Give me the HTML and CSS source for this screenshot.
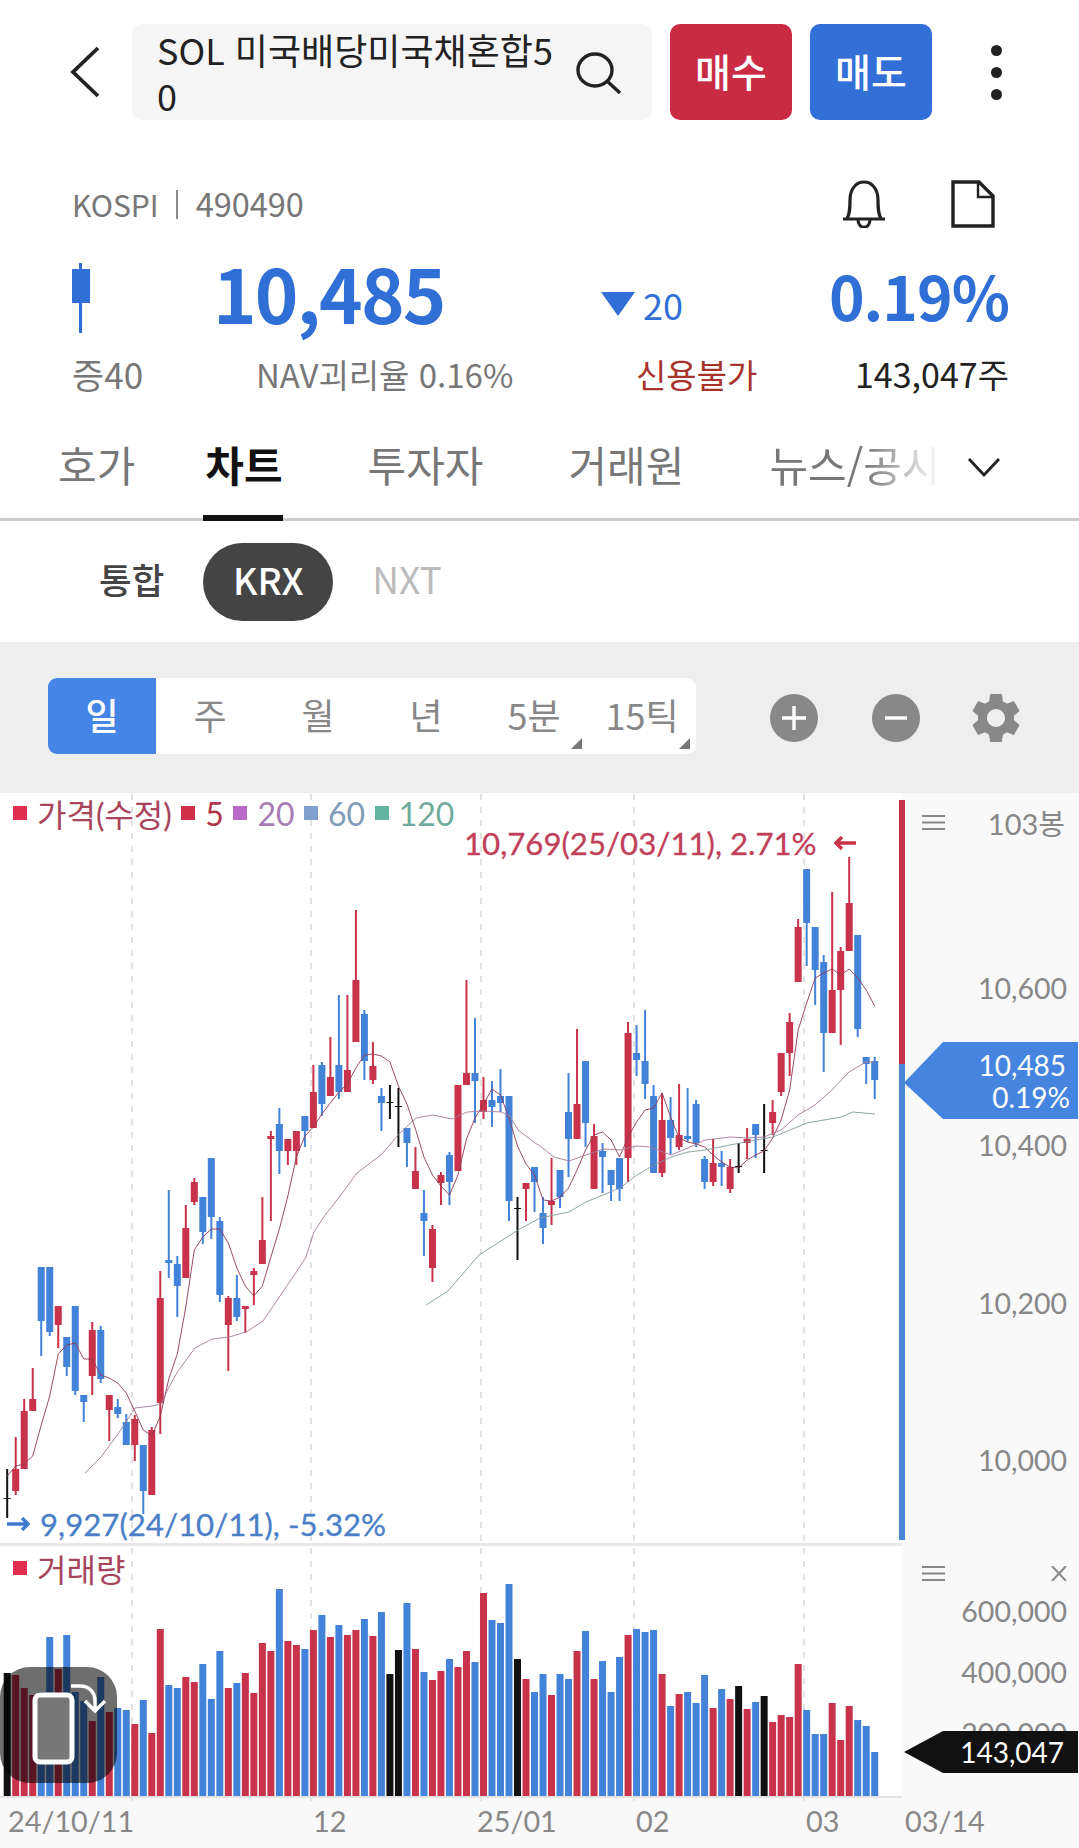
FILE: index.html
```html
<!DOCTYPE html>
<html lang="ko">
<head>
    <meta charset="UTF-8">
    <meta name="viewport" content="width=device-width, initial-scale=1.0">
    <title>SOL 미국배당미국채혼합50 차트</title>
    <link rel="stylesheet" href="styles.css">
</head>
<body>
    <header class="topbar">
        <svg class="back-icon" width="32" height="52" viewBox="0 0 32 52" fill="none" stroke="#222" stroke-width="3.8">
            <path d="M29 2 L4 26 L29 50"></path>
        </svg>
        <div class="search-box">
            <span class="search-text">SOL 미국배당미국채혼합50</span>
            <svg class="search-icon" width="46" height="42" viewBox="0 0 46 42" fill="none" stroke="#222" stroke-width="3.4">
                <ellipse cx="19" cy="18" rx="17" ry="16"></ellipse>
                <path d="M31 29 L44 41"></path>
            </svg>
        </div>
        <button class="order-btn buy">매수</button>
        <button class="order-btn sell">매도</button>
        <div class="more-btn"><i></i><i></i><i></i></div>
    </header>

    <section class="quote">
        <div class="code-row">
            <span class="code">KOSPI<b></b><em>490490</em></span>
            <div class="quote-icons">
                <svg width="46" height="48" viewBox="0 0 46 48" fill="none" stroke="#222" stroke-width="3.2">
                    <path d="M2 39 H44 M6 39 C9 33 9 28 9 20 C9 9 15 2 23 2 C31 2 37 9 37 20 C37 28 37 33 40 39"></path>
                    <path d="M17 39 C17 50 29 50 29 39"></path>
                </svg>
                <svg width="44" height="48" viewBox="0 0 44 48" fill="none" stroke="#222" stroke-width="3.4">
                    <path d="M2 2 H28 L42 16 V46 H2 Z"></path>
                    <path d="M27 2 V17 H42" stroke-width="2.4"></path>
                </svg>
            </div>
        </div>
        <div class="price-row">
            <div class="mini-candle"><i></i></div>
            <span class="price">10,485</span>
            <span class="change"><i class="down-arrow"></i>20</span>
            <span class="rate">0.19%</span>
        </div>
        <div class="info-row">
            <span class="margin">증40</span>
            <span class="nav">NAV괴리율 0.16%</span>
            <span class="credit">신용불가</span>
            <span class="volume">143,047주</span>
        </div>
    </section>

    <nav class="tabs">
        <a class="tab first">호가</a>
        <a class="tab active">차트</a>
        <a class="tab">투자자</a>
        <a class="tab">거래원</a>
        <a class="tab fade">뉴스/공시</a>
        <svg class="tabs-more" width="34" height="20" viewBox="0 0 34 20" fill="none" stroke="#222" stroke-width="2.8">
            <path d="M2 2 L17 18 L32 2"></path>
        </svg>
    </nav>

    <div class="market-tabs">
        <span class="market">통합</span>
        <span class="market on">KRX</span>
        <span class="market off">NXT</span>
    </div>

    <div class="chart-tools">
        <div class="period">
            <span class="period-item on">일</span>
            <span class="period-item">주</span>
            <span class="period-item">월</span>
            <span class="period-item">년</span>
            <span class="period-item corner">5분</span>
            <span class="period-item corner">15틱</span>
        </div>
        <div class="tool-btns">
            <svg width="48" height="48" viewBox="0 0 48 48"><circle cx="24" cy="24" r="24" fill="#888"></circle><path d="M12 24 H36 M24 12 V36" stroke="#fff" stroke-width="3.4"></path></svg>
            <svg width="48" height="48" viewBox="0 0 48 48"><circle cx="24" cy="24" r="24" fill="#888"></circle><path d="M13 24 H35" stroke="#fff" stroke-width="3.4"></path></svg>
            <svg class="gear" width="50" height="50" viewBox="2 2 20 20" fill="#888"><path d="M19.14 12.94c.04-.3.06-.61.06-.94 0-.32-.02-.64-.07-.94l2.03-1.58c.18-.14.23-.41.12-.61l-1.92-3.32c-.12-.22-.37-.29-.59-.22l-2.39.96c-.5-.38-1.03-.7-1.62-.94l-.36-2.54c-.04-.24-.24-.41-.48-.41h-3.84c-.24 0-.43.17-.47.41l-.36 2.54c-.59.24-1.13.57-1.62.94l-2.39-.96c-.22-.08-.47 0-.59.22L2.74 8.87c-.12.21-.08.47.12.61l2.03 1.58c-.05.3-.09.63-.09.94s.02.64.07.94l-2.03 1.58c-.18.14-.23.41-.12.61l1.92 3.32c.12.22.37.29.59.22l2.39-.96c.5.38 1.03.7 1.62.94l.36 2.54c.05.24.24.41.48.41h3.84c.24 0 .44-.17.47-.41l.36-2.54c.59-.24 1.13-.56 1.62-.94l2.39.96c.22.08.47 0 .59-.22l1.92-3.32c.12-.22.07-.47-.12-.61l-2.01-1.58zM12 15.6c-1.98 0-3.6-1.62-3.6-3.6s1.62-3.6 3.6-3.6 3.6 1.62 3.6 3.6-1.62 3.6-3.6 3.6z"></path></svg>
        </div>
    </div>

    <section class="chart">
        <div class="price-pane">
            <div class="legend">
                <i class="dot c-red"></i><span class="t-red">가격(수정)</span>
                <i class="dot c-ma5"></i><span class="t-ma5">5</span>
                <i class="dot c-ma20"></i><span class="t-ma20">20</span>
                <i class="dot c-ma60"></i><span class="t-ma60">60</span>
                <i class="dot c-ma120"></i><span class="t-ma120">120</span>
            </div>
            <div class="high-label">10,769(25/03/11), 2.71%<svg width="22" height="14" viewBox="0 0 22 14" fill="none" stroke="#c8324b" stroke-width="3.4"><path d="M22 7 H2 M8 1 L2 7 L8 13"></path></svg></div>
            <div class="low-label"><svg width="23" height="14" viewBox="0 0 23 14" fill="none" stroke="#3f7ccf" stroke-width="3.4"><path d="M0 7 H21 M15 1 L21 7 L15 13"></path></svg>9,927(24/10/11), -5.32%</div>
        </div>
        <div class="price-axis">
            <div class="axis-head">
                <svg class="menu-icon" width="23" height="15" viewBox="0 0 23 15" stroke="#888" stroke-width="2"><path d="M0 1 H23 M0 7.5 H23 M0 14 H23"></path></svg>
                <span class="bar-count">103봉</span>
            </div>
            <span class="price-tick">10,600</span>
            <span class="price-tick">10,400</span>
            <span class="price-tick">10,200</span>
            <span class="price-tick">10,000</span>
        </div>

        <div class="volume-pane">
            <div class="legend"><i class="dot c-red"></i><span class="t-red">거래량</span></div>
        </div>
        <div class="volume-axis">
            <div class="axis-head small">
                <svg class="menu-icon" width="23" height="15" viewBox="0 0 23 15" stroke="#888" stroke-width="2"><path d="M0 1 H23 M0 7.5 H23 M0 14 H23"></path></svg>
                <svg class="close-icon" width="16" height="15" viewBox="0 0 16 15" stroke="#888" stroke-width="2"><path d="M1 0 L15 15 M15 0 L1 15"></path></svg>
            </div>
            <span class="volume-tick">600,000</span>
            <span class="volume-tick">400,000</span>
            <span class="volume-tick">200,000</span>
        </div>

        <div class="date-axis">
            <span class="date" style="left:8px">24/10/11</span>
            <span class="date" style="left:313px">12</span>
            <span class="date" style="left:477px">25/01</span>
            <span class="date" style="left:636px">02</span>
            <span class="date" style="left:806px">03</span>
            <span class="date" style="left:905px">03/14</span>
        </div>

        <svg id="chartSvg" class="chart-svg" width="910" height="1055" viewBox="0 793 910 1055"></svg>

        <div class="tag price-tag"><span>10,485</span><span class="tag-rate">0.19%</span></div>
        <div class="tag volume-tag"><span>143,047</span></div>
    </section>

    <div class="rotate-btn">
        <svg width="117" height="116" viewBox="0 0 117 116" fill="none">
            <rect x="35" y="28" width="37" height="67" rx="5" fill="#777" stroke="#fff" stroke-width="5"></rect>
            <path d="M71 19 H80 C90 19 95 26 95 34 V42" stroke="#fff" stroke-width="3.4"></path>
            <path d="M85 34 L95 44 L105 34" stroke="#fff" stroke-width="3.4"></path>
        </svg>
    </div>

    <script src="chart.js"></script>
</body>
</html>
```

FILE: styles.css
```css
* {
    box-sizing: border-box;
}
body {
    margin: 0;
    width: 1079px;
    height: 1848px;
    overflow: hidden;
    position: relative;
    background: #fff;
    color: #222;
    font-family: "Noto Sans CJK KR", "Noto Sans", sans-serif;
}

/* top bar */
.topbar {
    display: flex;
    align-items: center;
    height: 96px;
    margin-top: 24px;
    padding-left: 69px;
}
.back-icon {
    margin-right: 31px;
}
.search-box {
    width: 520px;
    height: 96px;
    display: flex;
    align-items: center;
    justify-content: space-between;
    padding: 0 30px 0 25px;
    background: #f5f5f5;
    border-radius: 10px;
}
.search-text {
    width: 402px;
    font-size: 36px;
    line-height: 46px;
    word-break: break-all;
}
.search-icon {
    margin-top: 2px;
}
.order-btn {
    height: 96px;
    padding-bottom: 6px;
    border: 0;
    border-radius: 10px;
    color: #fff;
    font-family: inherit;
    font-size: 39px;
    font-weight: 500;
}
.buy {
    width: 122px;
    margin-left: 18px;
    background: #c92b45;
}
.sell {
    width: 122px;
    margin-left: 18px;
    background: #326fd6;
}
.more-btn {
    display: flex;
    flex-direction: column;
    gap: 11px;
    margin-left: 59px;
}
.more-btn i {
    width: 11px;
    height: 11px;
    border-radius: 50%;
    background: #222;
}

/* quote */
.quote {
    padding: 54px 70px 0 72px;
}
.code-row {
    display: flex;
    align-items: center;
    justify-content: space-between;
    height: 60px;
}
.code {
    display: flex;
    align-items: center;
    font-size: 30px;
    color: #777;
}
.code b {
    width: 2px;
    height: 29px;
    margin: 0 18px 0 17px;
    background: #888;
}
.code em {
    font-style: normal;
    font-size: 32.5px;
    margin-top: -3px;
}
.quote-icons {
    display: flex;
    gap: 64px;
    margin-right: 14px;
}
.price-row {
    display: grid;
    grid-template-columns: 141px 388px 1fr auto;
    align-items: center;
    height: 90px;
    margin-top: 4px;
    color: #2f6fd6;
}
.mini-candle {
    position: relative;
    width: 18px;
    height: 70px;
    margin-top: 12px;
}
.mini-candle::before {
    content: "";
    position: absolute;
    left: 7px;
    top: 0;
    width: 3px;
    height: 70px;
    background: #2f6fd6;
}
.mini-candle i {
    position: absolute;
    left: 0;
    top: 6px;
    width: 18px;
    height: 34px;
    background: #2f6fd6;
}
.price {
    font-size: 74px;
    font-weight: 700;
    letter-spacing: -1.8px;
}
.change {
    display: flex;
    align-items: center;
    font-size: 36px;
    margin-top: 24px;
}
.down-arrow {
    width: 0;
    height: 0;
    margin-right: 8px;
    border-left: 17px solid transparent;
    border-right: 17px solid transparent;
    border-top: 24px solid #2f6fd6;
}
.rate {
    font-size: 60.5px;
    font-weight: 700;
    letter-spacing: -1px;
    margin-top: 5px;
}
.info-row {
    display: grid;
    grid-template-columns: 184px 380px 1fr auto;
    align-items: center;
    height: 50px;
    margin-top: 20px;
    font-size: 33px;
    color: #777;
}
.margin {
    font-size: 35px;
}
.credit {
    color: #a8322c;
}
.volume {
    color: #222;
    font-size: 34px;
}

/* tabs */
.tabs {
    display: flex;
    align-items: flex-start;
    gap: 85px;
    height: 118px;
    margin-top: 5px;
    padding: 36px 0 0 58px;
    border-bottom: 3px solid #ccc;
    font-size: 42px;
    color: #777;
    position: relative;
}
.tab {
    line-height: 50px;
    position: relative;
}
.first {
    margin-right: -15px;
}
.active {
    color: #111;
    font-weight: 700;
}
.active::after {
    content: "";
    position: absolute;
    left: -2px;
    right: 0;
    top: 76px;
    height: 6px;
    background: #111;
}
.fade {
    width: 172px;
    white-space: nowrap;
    overflow: hidden;
    -webkit-mask-image: linear-gradient(to right, #000 55%, transparent 100%);
    mask-image: linear-gradient(to right, #000 55%, transparent 100%);
}
.tabs-more {
    position: absolute;
    left: 967px;
    top: 54px;
}

/* KRX / NXT */
.market-tabs {
    display: flex;
    align-items: center;
    height: 121px;
    padding-left: 99px;
    font-size: 35.5px;
}
.market {
    font-weight: 500;
    color: #444;
    margin-top: -7px;
}
.market.on {
    width: 130px;
    height: 78px;
    margin: 0 39px 0 39px;
    line-height: 72px;
    text-align: center;
    border-radius: 39px;
    background: #444;
    color: #fff;
    font-size: 37px;
}
.market.off {
    font-weight: 400;
    color: #bbb;
    font-size: 37px;
}

/* period bar */
.chart-tools {
    display: flex;
    align-items: center;
    justify-content: space-between;
    height: 151px;
    padding: 0 56px 0 48px;
    background: #eee;
}
.period {
    display: flex;
    height: 76px;
    margin-top: -3px;
    border-radius: 9px;
    overflow: hidden;
    background: #fff;
}
.period-item {
    position: relative;
    width: 108px;
    line-height: 72px;
    text-align: center;
    font-size: 36px;
    color: #888;
}
.period-item.on {
    background: #4585e5;
    color: #fff;
    font-weight: 500;
}
.corner::after {
    content: "";
    position: absolute;
    right: 6px;
    bottom: 5px;
    border-left: 11px solid transparent;
    border-bottom: 11px solid #777;
}
.tool-btns {
    display: flex;
    align-items: center;
    gap: 54px;
}
.gear {
    margin: 0 2px 0 -3px;
}

/* chart */
.chart {
    position: relative;
    display: grid;
    grid-template-columns: 902px 177px;
    grid-template-rows: 750px 253px 52px;
    font-family: Lato, "Noto Sans CJK KR", sans-serif;
}
.price-pane,
.volume-pane {
    position: relative;
}
.volume-pane {
    padding-top: 2px;
    border-top: 3px solid #e8e8e8;
}
.legend {
    position: relative;
    z-index: 1;
    display: flex;
    align-items: center;
    height: 40px;
    padding-left: 13px;
    font-size: 32px;
}
.dot {
    width: 14px;
    height: 14px;
    margin-right: 10px;
}
.legend span {
    margin-right: 9.5px;
}
.c-red { background: #e0304f; }
.c-ma5 { background: #d0304a; }
.c-ma20 { background: #b86cc8; }
.c-ma60 { background: #7fa0cc; }
.c-ma120 { background: #62b5a0; }
.t-red { color: #a8445c; }
.t-ma5 { color: #b23448; }
.t-ma20 { color: #a77cb5; }
.t-ma60 { color: #7f9cb8; }
.t-ma120 { color: #6fab9c; }
.high-label,
.low-label {
    position: absolute;
    z-index: 1;
    display: flex;
    align-items: center;
    font-size: 31.2px;
    -webkit-text-stroke: 0.3px;
    white-space: nowrap;
}
.high-label {
    left: 464px;
    top: 31px;
    gap: 17px;
    color: #c0405a;
}
.low-label {
    left: 7px;
    top: 712px;
    gap: 10px;
    color: #4a7fc8;
}
.price-axis,
.volume-axis {
    display: flex;
    flex-direction: column;
    align-items: flex-end;
    padding-right: 12px;
    background: #f9f9f9;
    color: #888;
    font-size: 28.5px;
}
.axis-head {
    display: flex;
    align-items: center;
    justify-content: space-between;
    width: 100%;
    height: 58px;
    padding-left: 20px;
    margin-bottom: 59px;
}
.axis-head.small {
    height: 37.5px;
    margin-bottom: 0;
    align-items: flex-end;
    padding-right: 0;
}
.bar-count {
    font-size: 29px;
    margin-right: 2px;
}
.price-tick {
    height: 157.3px;
    line-height: 157.3px;
}
.volume-tick {
    height: 61px;
    line-height: 61px;
}
.date-axis {
    grid-column: 1 / 3;
    position: relative;
    background: #f9f9f9;
    color: #888;
    font-size: 28.8px;
}
.date {
    position: absolute;
    top: 8px;
}
.chart-svg {
    position: absolute;
    left: 0;
    top: 0;
    pointer-events: none;
}
.tag {
    position: absolute;
    left: 904px;
    width: 174px;
    display: flex;
    flex-direction: column;
    align-items: flex-end;
    justify-content: center;
    color: #fff;
    font-size: 28px;
    line-height: 32px;
    padding-right: 12px;
}
.price-tag {
    top: 249px;
    height: 77px;
    background: #4585e0;
    clip-path: polygon(0 53%, 39px 0, 100% 0, 100% 100%, 39px 100%);
}
.tag-rate {
    margin-right: -4px;
}
.volume-tag {
    top: 938px;
    height: 42px;
    background: #111;
    clip-path: polygon(0 50%, 39px 0, 100% 0, 100% 100%, 39px 100%);
    padding-right: 14px;
}

/* floating rotate button */
.rotate-btn {
    position: absolute;
    left: 0;
    top: 1667px;
    width: 117px;
    height: 116px;
    border-radius: 30px;
    background: rgba(0, 0, 0, 0.57);
}
.rotate-btn svg {
    display: block;
}
```

FILE: chart.js
```js
const RED = '#c8324b';
const BLUE = '#4382d9';
const BLACK = '#111';
const PITCH = 8.505;
const FIRST_X = 7.2;
const VOLUME_BASE = 1796;

// [wick top, body top, body bottom, wick bottom, colour] in screen px
const candles = [
    [1469, 1498, 1499, 1518, 'k'], [1437, 1469, 1491, 1495, 'r'], [1399, 1411, 1469, 1469, 'r'], [1368, 1399, 1411, 1411, 'r'],
    [1267, 1267, 1321, 1356, 'b'], [1267, 1267, 1332, 1336, 'b'], [1306, 1306, 1325, 1348, 'r'], [1337, 1337, 1367, 1376, 'b'],
    [1306, 1306, 1391, 1395, 'b'], [1395, 1395, 1402, 1422, 'b'], [1322, 1330, 1376, 1395, 'r'], [1326, 1330, 1379, 1383, 'b'],
    [1395, 1395, 1410, 1441, 'r'], [1399, 1407, 1414, 1418, 'b'], [1414, 1422, 1445, 1445, 'b'], [1415, 1419, 1445, 1461, 'r'],
    [1445, 1445, 1491, 1514, 'b'], [1427, 1430, 1495, 1495, 'r'], [1271, 1298, 1403, 1434, 'r'], [1190, 1260, 1263, 1278, 'b'],
    [1256, 1264, 1286, 1317, 'b'], [1205, 1228, 1278, 1278, 'r'], [1178, 1182, 1202, 1205, 'r'], [1197, 1197, 1232, 1244, 'b'],
    [1158, 1158, 1217, 1239, 'b'], [1217, 1221, 1295, 1302, 'b'], [1296, 1298, 1325, 1371, 'r'], [1275, 1298, 1317, 1321, 'b'],
    [1306, 1306, 1309, 1333, 'r'], [1268, 1271, 1275, 1305, 'r'], [1197, 1240, 1264, 1264, 'r'], [1131, 1136, 1139, 1221, 'r'],
    [1108, 1124, 1151, 1174, 'b'], [1139, 1139, 1151, 1165, 'r'], [1131, 1131, 1151, 1165, 'r'], [1116, 1116, 1131, 1147, 'b'],
    [1065, 1092, 1128, 1128, 'r'], [1062, 1065, 1104, 1116, 'b'], [1037, 1077, 1096, 1096, 'r'], [995, 1065, 1092, 1099, 'b'],
    [995, 1070, 1092, 1092, 'r'], [910, 980, 1042, 1042, 'r'], [1010, 1014, 1061, 1080, 'b'], [1042, 1066, 1080, 1084, 'r'],
    [1088, 1096, 1103, 1131, 'b'], [1085, 1102, 1103, 1119, 'k'], [1088, 1106, 1107, 1147, 'k'], [1128, 1128, 1143, 1167, 'b'],
    [1147, 1171, 1189, 1189, 'r'], [1190, 1213, 1221, 1256, 'b'], [1225, 1229, 1268, 1282, 'r'], [1172, 1175, 1183, 1205, 'r'],
    [1152, 1155, 1182, 1205, 'b'], [1085, 1085, 1171, 1171, 'r'], [980, 1073, 1085, 1085, 'r'], [1018, 1073, 1081, 1123, 'b'],
    [1077, 1100, 1112, 1119, 'r'], [1081, 1100, 1107, 1127, 'b'], [1069, 1096, 1103, 1112, 'b'], [1096, 1096, 1201, 1221, 'b'],
    [1197, 1208, 1209, 1260, 'k'], [1183, 1183, 1189, 1221, 'r'], [1167, 1167, 1182, 1212, 'b'], [1197, 1213, 1228, 1244, 'b'],
    [1158, 1201, 1205, 1225, 'r'], [1170, 1170, 1197, 1208, 'b'], [1073, 1112, 1139, 1177, 'b'], [1029, 1104, 1139, 1139, 'r'],
    [1061, 1061, 1123, 1147, 'b'], [1124, 1136, 1189, 1189, 'r'], [1143, 1151, 1157, 1193, 'b'], [1170, 1170, 1185, 1201, 'b'],
    [1158, 1158, 1189, 1201, 'b'], [1022, 1033, 1158, 1182, 'r'], [1025, 1053, 1060, 1076, 'b'], [1010, 1061, 1084, 1099, 'b'],
    [1085, 1096, 1173, 1173, 'b'], [1093, 1120, 1173, 1177, 'r'], [1097, 1120, 1138, 1154, 'b'], [1084, 1135, 1147, 1150, 'r'],
    [1088, 1136, 1139, 1142, 'b'], [1100, 1104, 1143, 1147, 'b'], [1156, 1159, 1182, 1189, 'b'], [1139, 1163, 1182, 1186, 'r'],
    [1151, 1163, 1167, 1186, 'b'], [1159, 1167, 1189, 1193, 'r'], [1143, 1166, 1167, 1173, 'k'], [1128, 1139, 1143, 1159, 'r'],
    [1124, 1124, 1135, 1158, 'b'], [1104, 1150, 1151, 1173, 'k'], [1100, 1112, 1123, 1135, 'r'], [1053, 1053, 1092, 1096, 'r'],
    [1013, 1022, 1053, 1076, 'r'], [919, 927, 982, 982, 'r'], [869, 869, 923, 966, 'b'], [927, 927, 970, 1005, 'b'],
    [955, 962, 1033, 1072, 'b'], [892, 990, 1033, 1033, 'r'], [947, 951, 990, 1045, 'r'], [857, 903, 951, 951, 'r'],
    [935, 935, 1029, 1037, 'b'], [1057, 1057, 1064, 1084, 'b'], [1057, 1061, 1080, 1099, 'b']
];

// bar height in px for each candle
const volumes = [
    123, 121, 108, 101, 104, 159, 127, 161, 104, 95, 75, 119, 84, 88, 86, 72, 96, 63, 167, 111, 108,
    119, 114, 132, 97, 145, 108, 113, 123, 103, 153, 145, 207, 155, 151, 147, 166, 181, 159, 171, 161,
    166, 177, 160, 184, 122, 146, 193, 147, 124, 116, 125, 137, 129, 145, 134, 203, 176, 173, 212, 137,
    117, 104, 122, 101, 122, 117, 145, 165, 117, 135, 104, 139, 161, 167, 164, 166, 122, 90, 102, 104,
    93, 121, 88, 107, 97, 110, 87, 94, 100, 74, 81, 79, 132, 86, 62, 62, 93, 56, 90, 76, 70, 44
];

const ma5 = [
    1476, 1466, 1464, 1456, 1425, 1396, 1354, 1345, 1343, 1359, 1359, 1375, 1378, 1383, 1393, 1411, 1430, 1436, 1416, 1379, 1354,
    1307, 1250, 1237, 1229, 1229, 1243, 1268, 1286, 1296, 1286, 1257, 1229, 1196, 1157, 1136, 1127, 1114, 1103, 1092, 1084,
    1068, 1055, 1054, 1056, 1062, 1086, 1104, 1129, 1157, 1175, 1186, 1195, 1175, 1139, 1118, 1104, 1089, 1095, 1118, 1146,
    1164, 1175, 1200, 1201, 1197, 1188, 1170, 1150, 1135, 1132, 1140, 1157, 1137, 1122, 1110, 1108, 1093, 1117, 1138, 1142,
    1144, 1147, 1155, 1162, 1167, 1168, 1160, 1155, 1151, 1138, 1120, 1090, 1030, 1003, 978, 973, 969, 975, 969, 978, 990, 1006
];

const ma20 = [
    [85, 1473], [101, 1457], [118, 1434], [135, 1408], [152, 1406], [161, 1404], [169, 1387], [178, 1371], [195, 1348], [212, 1339],
    [229, 1337], [246, 1332], [263, 1321], [280, 1296], [297, 1271], [306, 1257], [314, 1232], [323, 1218], [340, 1196], [357, 1173],
    [382, 1154], [399, 1134], [416, 1118], [433, 1115], [452, 1119], [467, 1112], [484, 1111], [501, 1112], [510, 1116], [518, 1130],
    [535, 1143], [540, 1146], [554, 1157], [569, 1161], [586, 1155], [603, 1149], [620, 1150], [637, 1146], [650, 1147], [671, 1155],
    [688, 1148], [705, 1140], [730, 1137], [747, 1138], [764, 1137], [781, 1130], [798, 1115], [815, 1105], [832, 1090], [849, 1072],
    [866, 1062], [875, 1062]
];

const ma60 = [
    [426, 1305], [448, 1291], [479, 1255], [518, 1230], [540, 1218], [569, 1212], [586, 1202], [603, 1195], [620, 1188], [637, 1175],
    [654, 1165], [671, 1157], [688, 1152], [705, 1150], [730, 1145], [756, 1140], [773, 1137], [790, 1130], [807, 1123], [824, 1120],
    [841, 1117], [853, 1112], [875, 1114]
];

const gridX = [132, 311, 481, 634, 804];
const colours = { r: RED, b: BLUE, k: BLACK };

function rect(x, y, w, h, fill) {
    return `<rect x="${x}" y="${y}" width="${w}" height="${h}" fill="${fill}"/>`;
}

function line(points, stroke) {
    return `<polyline points="${points.join(' ')}" fill="none" stroke="${stroke}" stroke-width="0.9" stroke-linejoin="round"/>`;
}

function drawChart() {
    let out = '';

    gridX.forEach(function (x) {
        out += `<path d="M${x} 794 V1807" stroke="#e2e2e2" stroke-width="2" stroke-dasharray="6 7"/>`;
    });

    candles.forEach(function (c, i) {
        const x = FIRST_X + i * PITCH;
        const fill = colours[c[4]];
        out += rect(x - 1, c[0], 2, c[3] - c[0], fill);
        if (c[4] === 'k') {
            out += rect(x - 3.5, c[1], 7, 1, fill);
        } else {
            out += rect(x - 3.5, c[1], 7, c[2] - c[1], fill);
        }
        out += rect(x - 3.5, VOLUME_BASE - volumes[i], 7, volumes[i], fill);
    });

    out += line(ma5.map(function (y, i) { return [FIRST_X + i * PITCH, y]; }), '#8f3a52');
    out += line(ma20, '#a57a9a');
    out += line(ma60, '#7f9a9c');

    // current price bar on the axis edge
    out += rect(899, 800, 6, 264, RED);
    out += rect(899, 1064, 6, 476, '#4a86d8');
    out += rect(0, 1796, 902, 2, '#e4e4e4');

    document.getElementById('chartSvg').innerHTML = out;
}

drawChart();
```
